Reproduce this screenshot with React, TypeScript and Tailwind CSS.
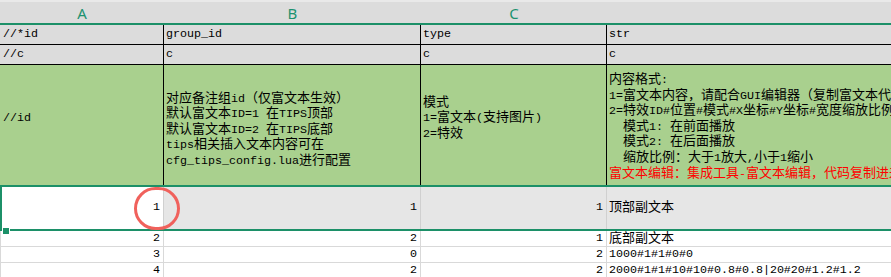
import React from "react";

const FONT = { fontFamily: '"Liberation Mono", "Noto Sans CJK SC", monospace' };

function T({ s }: { s: string }) {
  const parts = s.split(/([\u3000-\u303f\u4e00-\u9fff\uff00-\uffef]+)/);
  return (
    <>
      {parts.map((p, i) =>
        i % 2 === 1 ? (
          <span key={i} className="text-[13px] leading-[8px]">
            {p}
          </span>
        ) : (
          <React.Fragment key={i}>{p}</React.Fragment>
        )
      )}
    </>
  );
}

export default function App() {
  const green = "border-[#1c9068]";
  return (
    <div
      className="relative w-[891px] h-[277px] overflow-hidden bg-white text-[11.67px] leading-[15.6px] text-black"
      style={FONT}
    >
      {/* column letters */}
      <div className={`flex h-[25px] bg-[#dcdcdc] border-t-2 border-t-[#e9e9e9] border-b-2 ${green}`}>
        {["A", "B", "C", ""].map((l, i) => (
          <div
            key={i}
            className={`${["w-[164px]", "w-[257px]", "w-[186px]", "flex-1"][i]} flex items-center justify-center pt-[2px] text-[15px] text-[#1d9270]`}
            style={{ fontFamily: '"Noto Sans", "Liberation Sans", sans-serif' }}
          >
            {l}
          </div>
        ))}
      </div>

      {/* row 1 */}
      <div className="flex h-[20px] bg-[#dcdcdc] border-b border-black">
        <div className="w-[164px] border-r border-black pl-[3px] flex items-center">//*id</div>
        <div className="w-[257px] border-r border-black pl-[2px] flex items-center">group_id</div>
        <div className="w-[186px] border-r border-black pl-[2px] flex items-center">type</div>
        <div className="flex-1 pl-[2px] flex items-center">str</div>
      </div>

      {/* row 2 */}
      <div className="flex h-[20px] bg-[#dcdcdc] border-b border-black">
        <div className="w-[164px] border-r border-black pl-[3px] flex items-center">//c</div>
        <div className="w-[257px] border-r border-black pl-[2px] flex items-center">c</div>
        <div className="w-[186px] border-r border-black pl-[2px] flex items-center">c</div>
        <div className="flex-1 pl-[2px] flex items-center">c</div>
      </div>

      {/* row 3 (description) */}
      <div className={`flex h-[122px] bg-[#a9d08e] border-b-2 ${green}`}>
        <div className="w-[164px] border-r border-black pl-[3px] flex items-center pb-[12px]">//id</div>
        <div className="w-[257px] border-r border-black pl-[2px] flex flex-col justify-center pt-[11px] whitespace-nowrap overflow-hidden">
          <div><T s="对应备注组id（仅富文本生效）" /></div>
          <div><T s="默认富文本ID=1 在TIPS顶部" /></div>
          <div><T s="默认富文本ID=2 在TIPS底部" /></div>
          <div><T s="tips相关插入文本内容可在" /></div>
          <div><T s="cfg_tips_config.lua进行配置" /></div>
        </div>
        <div className="w-[186px] border-r border-black pl-[2px] flex flex-col justify-center pb-[12px] whitespace-nowrap overflow-hidden">
          <div><T s="模式" /></div>
          <div><T s="1=富文本(支持图片)" /></div>
          <div><T s="2=特效" /></div>
        </div>
        <div className="flex-1 pl-[2px] pt-[8px] whitespace-pre overflow-hidden">
          <div><T s="内容格式:" /></div>
          <div><T s="1=富文本内容，请配合GUI编辑器（复制富文本代码到这里）" /></div>
          <div><T s="2=特效ID#位置#模式#X坐标#Y坐标#宽度缩放比例#高度缩放比例" /></div>
          <div><T s="  模式1: 在前面播放" /></div>
          <div><T s="  模式2: 在后面播放" /></div>
          <div><T s="  缩放比例：大于1放大,小于1缩小" /></div>
          <div className="text-[#ff0000]"><T s="富文本编辑：集成工具-富文本编辑，代码复制进来即可" /></div>
        </div>
      </div>

      {/* row 4 (selected) */}
      <div className={`flex h-[44px] border-b-2 ${green}`}>
        <div className={`w-[164px] bg-white border-l-2 ${green} border-r border-r-[#d0d0d0] pr-[3px] flex items-center justify-end`}>1</div>
        <div className="w-[257px] bg-[#e6e6e6] border-r border-[#d0d0d0] pr-[3px] flex items-center justify-end">1</div>
        <div className="w-[186px] bg-[#e6e6e6] border-r border-[#d0d0d0] pr-[3px] flex items-center justify-end">1</div>
        <div className="flex-1 bg-[#e6e6e6] pl-[2px] flex items-center"><T s="顶部副文本" /></div>
      </div>

      {/* data rows */}
      {[
        ["2", "2", "1", "底部副文本"],
        ["3", "0", "2", "1000#1#1#0#0"],
        ["4", "2", "2", "2000#1#1#10#10#0.8#0.8|20#20#1.2#1.2"],
      ].map((r, i) => (
        <div key={i} className="flex h-[16px] border-b border-[#d9d9d9]">
          <div className="w-[164px] border-l border-l-[#d9d9d9] border-r border-[#d9d9d9] pr-[3px] flex items-center justify-end">{r[0]}</div>
          <div className="w-[257px] border-r border-[#d9d9d9] pr-[3px] flex items-center justify-end">{r[1]}</div>
          <div className="w-[186px] border-r border-[#d9d9d9] pr-[3px] flex items-center justify-end">{r[2]}</div>
          <div className="flex-1 pl-[2px] flex items-center whitespace-nowrap"><T s={r[3]} /></div>
        </div>
      ))}

      {/* fill handle */}
      <div className="absolute left-[2px] top-[227px] w-[8px] h-[8px] bg-[#1c9068] border border-white" />
      {/* red annotation circle */}
      <div className="absolute left-[134px] top-[187px] w-[46px] h-[43px] rounded-full border-[3px] border-[#f0615c]" />
    </div>
  );
}
